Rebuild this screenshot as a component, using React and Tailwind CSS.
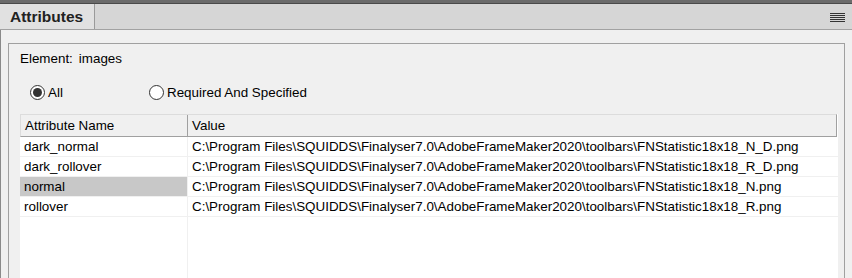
import React from "react";

const rows = [
  ["dark_normal", "C:\\Program Files\\SQUIDDS\\Finalyser7.0\\AdobeFrameMaker2020\\toolbars\\FNStatistic18x18_N_D.png"],
  ["dark_rollover", "C:\\Program Files\\SQUIDDS\\Finalyser7.0\\AdobeFrameMaker2020\\toolbars\\FNStatistic18x18_R_D.png"],
  ["normal", "C:\\Program Files\\SQUIDDS\\Finalyser7.0\\AdobeFrameMaker2020\\toolbars\\FNStatistic18x18_N.png", true],
  ["rollover", "C:\\Program Files\\SQUIDDS\\Finalyser7.0\\AdobeFrameMaker2020\\toolbars\\FNStatistic18x18_R.png"],
];

function Radio({ checked, label }) {
  return (
    <div className="flex items-center gap-[3px]">
      <div className="w-[15px] h-[15px] rounded-full border border-[#333] bg-white flex items-center justify-center">
        {checked && <div className="w-[9px] h-[9px] rounded-full bg-[#333]" />}
      </div>
      <span>{label}</span>
    </div>
  );
}

export default function App() {
  return (
    <div className="w-[852px] h-[278px] overflow-hidden bg-[#f0f0f0] font-['Liberation_Sans',Arial,sans-serif] text-[13.4px] text-black flex flex-col">
      <div className="h-[4px] bg-[#6b6b6b] border-b border-[#4a4a4a] shrink-0" />
      <div className="h-[26px] bg-[#d6d6d6] border-b border-[#a2a2a2] flex shrink-0">
        <div className="w-[95px] bg-[#e1e1e1] border-r border-[#9a9a9a] flex items-center pl-[10px] pt-[1px] text-[15.5px] font-bold text-[#222]">
          Attributes
        </div>
        <div className="flex-1 flex items-center justify-end pr-[7px]">
          <div className="w-[15px] flex flex-col gap-[1px] mt-[1px]">
            <div className="h-[1px] bg-[#333]" />
            <div className="h-[1px] bg-[#333]" />
            <div className="h-[1px] bg-[#333]" />
            <div className="h-[1px] bg-[#333]" />
            <div className="h-[1px] bg-[#333]" />
          </div>
        </div>
      </div>
      <div className="flex-1 pl-[7px] pr-[7px] pt-[13px] border-l border-[#8a8a8a] min-h-0">
        <div className="h-full border border-b-0 border-[#a0a0a0] flex flex-col">
          <div className="pl-[11px] pt-[7px] h-[23px] flex items-center gap-[6px]">
            <span>Element:</span>
            <span>images</span>
          </div>
          <div className="flex items-center h-[26px] mt-[13px] pl-[21px]">
            <div className="w-[119px]">
              <Radio checked label="All" />
            </div>
            <Radio label="Required And Specified" />
          </div>
          <div className="ml-[11px] w-[818px] mt-[8px] flex-1 bg-white flex flex-col">
            <div className="h-[23px] flex bg-[#f0f0f0] border-t border-l border-[#dcdcdc] border-b border-b-[#a0a0a0] border-r border-r-[#a0a0a0] w-[817px]">
              <div className="w-[167px] border-r border-[#a0a0a0] flex items-center pl-[4px] pt-[1px]">Attribute Name</div>
              <div className="flex-1 flex items-center pl-[4px] pt-[1px]">Value</div>
            </div>
            {rows.map(([n, v, sel]) => (
              <div key={n} className="h-[20px] flex border-b border-[#f0f0f0]">
                <div className={`w-[168px] border-r border-[#f0f0f0] flex items-center pl-[4px] pt-[2px] ${sel ? "bg-[#c8c8c8]" : ""}`}>{n}</div>
                <div className="flex-1 flex items-center pl-[4px] pt-[2px] whitespace-nowrap">{v}</div>
              </div>
            ))}
            <div className="flex-1 flex">
              <div className="w-[168px] border-r border-[#f0f0f0]" />
            </div>
          </div>
        </div>
      </div>
    </div>
  );
}
